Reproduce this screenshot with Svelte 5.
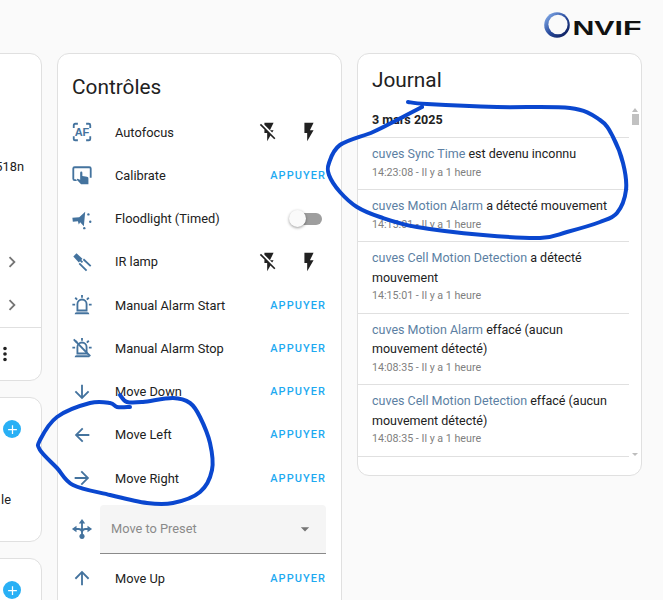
<script>
  const P = {
    flash: 'M7,2V13H10V22L17,10H13L17,2H7Z',
    flashOff: 'M17,10H13L17,2H7V4.18L15.46,12.64M3.27,3L2,4.27L7,9.27V13H10V22L13.58,15.86L17.73,20L19,18.73L3.27,3Z',
    down: 'M11,4H13V16L18.5,10.5L19.92,11.92L12,19.84L4.08,11.92L5.5,10.5L11,16V4Z',
    left: 'M20,11V13H8L13.5,18.5L12.08,19.92L4.16,12L12.08,4.08L13.5,5.5L8,11H20Z',
    right: 'M4,11V13H16L10.5,18.5L11.92,19.92L19.84,12L11.92,4.08L10.5,5.5L16,11H4Z',
    up: 'M13,20H11V8L5.5,13.5L4.08,12.08L12,4.16L19.92,12.08L18.5,13.5L13,8V20Z',
    chevron: 'M8.59,16.58L13.17,12L8.59,7.41L10,6L16,12L10,18L8.59,16.58Z',
    dots: 'M12,16A2,2 0 0,1 14,18A2,2 0 0,1 12,20A2,2 0 0,1 10,18A2,2 0 0,1 12,16M12,10A2,2 0 0,1 14,12A2,2 0 0,1 12,14A2,2 0 0,1 10,12A2,2 0 0,1 12,10M12,4A2,2 0 0,1 14,6A2,2 0 0,1 12,8A2,2 0 0,1 10,6A2,2 0 0,1 12,4Z',
    plus: 'M19,13H13V19H11V13H5V11H11V5H13V11H19V13Z',
    alarm: 'M6,6.9L3.87,4.78L5.28,3.37L7.4,5.5L6,6.9M13,1V4H11V1H13M20.13,4.78L18,6.9L16.6,5.5L18.72,3.37L20.13,4.78M4.5,10.5V12.5H1.5V10.5H4.5M19.5,10.5H22.5V12.5H19.5V10.5M6,20H18A2,2 0 0,1 20,22H4A2,2 0 0,1 6,20M12,5A6,6 0 0,1 18,11V19H6V11A6,6 0 0,1 12,5M12,7A4,4 0 0,0 8,11V17H16V11A4,4 0 0,0 12,7Z'
  };
  const pressRows = [
    { k: 'alarm', label: 'Manual Alarm Start' },
    { k: 'alarmOff', label: 'Manual Alarm Stop' },
    { k: 'down', label: 'Move Down' },
    { k: 'left', label: 'Move Left' },
    { k: 'right', label: 'Move Right' }
  ];
  const log = [
    { name: 'cuves Sync Time', msg: 'est devenu inconnu', time: '14:23:08 - Il y a 1 heure' },
    { name: 'cuves Motion Alarm', msg: 'a détecté mouvement', time: '14:15:01 - Il y a 1 heure' },
    { name: 'cuves Cell Motion Detection', msg: 'a détecté mouvement', time: '14:15:01 - Il y a 1 heure' },
    { name: 'cuves Motion Alarm', msg: 'effacé (aucun mouvement détecté)', time: '14:08:35 - Il y a 1 heure' },
    { name: 'cuves Cell Motion Detection', msg: 'effacé (aucun mouvement détecté)', time: '14:08:35 - Il y a 1 heure' }
  ];
  // Hand-drawn circles: smooth a list of points with a Catmull-Rom curve.
  function smooth(pts) {
    let d = `M${pts[0][0]} ${pts[0][1]}`;
    for (let i = 0; i < pts.length - 1; i++) {
      const a = pts[i - 1] || pts[i], b = pts[i], c = pts[i + 1], e = pts[i + 2] || c;
      const c1 = [b[0] + (c[0] - a[0]) / 6, b[1] + (c[1] - a[1]) / 6];
      const c2 = [c[0] - (e[0] - b[0]) / 6, c[1] - (e[1] - b[1]) / 6];
      d += `C${c1[0].toFixed(1)} ${c1[1].toFixed(1)} ${c2[0].toFixed(1)} ${c2[1].toFixed(1)} ${c[0]} ${c[1]}`;
    }
    return d;
  }
  const inkA = smooth([[408,102],[427,104],[497,107],[570,108],[600,120],[613,137],[623,163],[626,190],[617,213],[600,222],[567,232],[540,238],[483,235],[417,227],[380,217],[357,207],[340,192],[329,175],[329,163],[340,145],[373,132],[397,120],[422,107]]);
  const inkB = smooth([[120,395],[127,402],[143,402],[173,398],[190,403],[200,417],[210,443],[212,470],[200,492],[173,503],[147,503],[110,495],[73,485],[57,468],[40,450],[40,440],[57,417],[90,403],[110,403],[117,407],[130,407]]);
</script>

{#snippet icon(k)}
  <svg class="ic" viewBox="0 0 24 24">
    {#if k === 'af'}
      <path class="ln" d="M7.500 3H4.500A1.500 1.500 0 0 0 3 4.500V7.500M16.500 3h3A1.500 1.500 0 0 1 21 4.500V7.500M7.500 21H4.500A1.500 1.500 0 0 1 3 19.500V16.500M16.500 21h3a1.500 1.500 0 0 0 1.500-1.500V16.500" />
      <text class="af" x="12" y="16.500" text-anchor="middle">AF</text>
    {:else if k === 'cal'}
      <path class="ln" d="M8.500 17.500H4a1.500 1.500 0 0 1-1.500-1.500V5A1.500 1.500 0 0 1 4 3.500h16A1.500 1.500 0 0 1 21.500 5v10" />
      <path class="hand" d="M10 9.500a1.200 1.200 0 0 1 2.400 0V13l5 .9c1 .2 1.600.9 1.600 1.800V22h-8l-5-5 1-1 3 1.200z" />
    {:else if k === 'flood'}
      <path d="M1.500 10.500l7.500-.5 6.500-6L14 20l-4-4.500-1.500 2.500-1-3.500-5.500.5z" />
      <circle cx="19" cy="7" r="1.300" /><circle cx="21" cy="15" r="1.300" /><circle cx="14.500" cy="22" r="1.300" />
    {:else if k === 'ir'}
      <path d="M2.500 6L6 2.500l6.500 6-4 4z" />
      <path class="ln" d="M9 13.500l8 8M13.500 9l8 7.500M10 10l2.500 2.500" />
    {:else if k === 'alarm' || k === 'alarmOff'}
      <path d={P.alarm} />
      {#if k === 'alarmOff'}<path class="ln" d="M3 2.500L21 21" />{/if}
    {:else if k === 'move'}
      <path class="ln" d="M12 5v14M4.500 12H8c2.500 0 4 1.500 4 4M19.500 12H16c-2.500 0-4 1.500-4 4" />
      <path d="M12 1l3.500 5h-7zM1 12l5-3.500v7zM23 12l-5-3.500v7z" />
      <circle cx="12" cy="20" r="2.800" />
    {:else}
      <path d={P[k]} />
    {/if}
  </svg>
{/snippet}

<div class="page">
  <header class="top">
    <svg class="logo" viewBox="0 0 98 28" role="img" aria-label="ONVIF">
      <defs>
        <linearGradient id="ring" x1="0.1" y1="0.1" x2="0.9" y2="0.9">
          <stop offset="0" stop-color="#7fa8e6" />
          <stop offset=".5" stop-color="#2a4c9e" />
          <stop offset="1" stop-color="#0c1d5c" />
        </linearGradient>
      </defs>
      <circle cx="13" cy="14" r="12.800" fill="url(#ring)" />
      <ellipse cx="14" cy="13.500" rx="9.600" ry="9.800" fill="#fafafa" />
      <text class="nvif" x="28.500" y="23.500" textLength="69" lengthAdjust="spacingAndGlyphs">NVIF</text>
    </svg>
  </header>

  <div class="columns">
    <div class="col">
      <section class="card first">
        <div class="value">518n</div>
        <div class="chev one"><svg class="ic gray" viewBox="0 0 24 24"><path d={P.chevron} /></svg></div>
        <div class="chev"><svg class="ic gray" viewBox="0 0 24 24"><path d={P.chevron} /></svg></div>
        <div class="foot"><svg class="ic dark" viewBox="0 0 24 24"><path d={P.dots} /></svg></div>
      </section>
      <section class="card second">
        <span class="add"><svg viewBox="0 0 24 24"><path d={P.plus} /></svg></span>
        <div class="value le">le</div>
      </section>
      <section class="card third">
        <span class="add"><svg viewBox="0 0 24 24"><path d={P.plus} /></svg></span>
      </section>
    </div>

    <section class="card controls">
      <h2>Contrôles</h2>
      <div class="row">
        {@render icon('af')}<span class="label">Autofocus</span>
        <span class="flashes">
          <svg class="ic dark" viewBox="0 0 24 24"><path d={P.flashOff} /></svg>
          <svg class="ic dark" viewBox="0 0 24 24"><path d={P.flash} /></svg>
        </span>
      </div>
      <div class="row">
        {@render icon('cal')}<span class="label">Calibrate</span><span class="press">APPUYER</span>
      </div>
      <div class="row">
        {@render icon('flood')}<span class="label">Floodlight (Timed)</span>
        <span class="toggle"><span class="knob"></span></span>
      </div>
      <div class="row">
        {@render icon('ir')}<span class="label">IR lamp</span>
        <span class="flashes">
          <svg class="ic dark" viewBox="0 0 24 24"><path d={P.flashOff} /></svg>
          <svg class="ic dark" viewBox="0 0 24 24"><path d={P.flash} /></svg>
        </span>
      </div>
      {#each pressRows as r}
        <div class="row">
          {@render icon(r.k)}<span class="label">{r.label}</span><span class="press">APPUYER</span>
        </div>
      {/each}
      <div class="row select-row">
        {@render icon('move')}
        <div class="select">
          <span>Move to Preset</span>
          <svg class="caret" viewBox="0 0 24 24"><path d="M7,10L12,15L17,10H7Z" /></svg>
        </div>
      </div>
      <div class="row">
        {@render icon('up')}<span class="label">Move Up</span><span class="press">APPUYER</span>
      </div>
    </section>

    <section class="card journal">
      <h2>Journal</h2>
      <div class="log-wrap">
        <div class="log">
          <div class="date">3 mars 2025</div>
          {#each log as e}
            <div class="entry">
              <div class="msg"><span class="name">{e.name}</span> {e.msg}</div>
              <div class="time">{e.time}</div>
            </div>
          {/each}
        </div>
        <div class="bar">
          <span class="tri"></span>
          <span class="thumb"></span>
          <span class="tri dn"></span>
        </div>
      </div>
    </section>
  </div>

  <svg class="ink" viewBox="0 0 663 600" aria-hidden="true">
    <path d={inkA} />
    <path d={inkB} />
  </svg>
</div>

<style>
  :global(body) {
    margin: 0;
    background: #fafafa;
    font-family: Roboto, "Liberation Sans", sans-serif;
    color: #212121;
    overflow: hidden;
  }
  .page {
    position: relative;
    width: 663px;
    height: 600px;
    overflow: hidden;
  }
  .top {
    height: 53px;
    display: flex;
    justify-content: flex-end;
    align-items: flex-start;
    padding: 11px 21px 0 0;
    box-sizing: border-box;
  }
  .logo { width: 98px; height: 28px; display: block; }
  .nvif {
    font-family: "Liberation Sans", sans-serif;
    font-weight: 700;
    font-size: 21px;
    fill: #111;
  }
  .columns {
    display: flex;
    align-items: flex-start;
    gap: 15px;
    margin-left: -243px;
  }
  .col {
    width: 285px;
    flex: none;
    display: flex;
    flex-direction: column;
    gap: 16px;
  }
  .card {
    background: #fff;
    border: 1px solid #e0e0e0;
    border-radius: 12px;
    box-sizing: border-box;
  }
  .first { height: 328px; position: relative; padding-top: 103px; }
  .second { height: 145px; padding-top: 22px; }
  .third { height: 120px; padding-top: 22px; }
  .value {
    font-size: 12.800px;
    line-height: 20px;
    text-align: right;
    padding-right: 17px;
  }
  .le { margin-top: 52px; padding-right: 30px; }
  .chev { display: flex; justify-content: flex-end; padding-right: 18px; height: 43px; align-items: center; }
  .chev.one { margin-top: 63px; }
  .foot {
    border-top: 1px solid #e0e0e0;
    height: 52px;
    display: flex;
    align-items: center;
    justify-content: flex-end;
    padding-right: 25px;
    position: absolute;
    left: 0;
    right: 0;
    bottom: 0;
  }
  .add {
    display: flex;
    justify-content: center;
    align-items: center;
    width: 18px;
    height: 18px;
    border-radius: 50%;
    background: #29b0f5;
    margin-left: auto;
    margin-right: 20px;
  }
  .add svg { width: 15px; height: 15px; fill: #fff; }
  .controls {
    width: 285px;
    flex: none;
    height: 600px;
  }
  h2 {
    margin: 0;
    font-size: 20.800px;
    font-weight: 400;
    line-height: 28px;
    color: #212121;
  }
  .controls h2 { padding: 19px 0 9.400px 14px; }
  .row {
    height: 43.25px;
    display: flex;
    align-items: center;
    padding: 0 15px 0 13px;
  }
  .ic {
    width: 22px;
    height: 22px;
    flex: none;
    fill: #44739e;
  }
  .ln { fill: none; stroke: #44739e; stroke-width: 2; }
  .hand { stroke: #fff; stroke-width: 1.200px; paint-order: stroke; }
  .af { font: 700 12px "Liberation Sans", sans-serif; fill: #44739e; }
  .dark { fill: #212121; }
  .gray { fill: #757575; }
  .label {
    margin-left: 22px;
    font-size: 12.800px;
    flex: 1;
    white-space: nowrap;
  }
  .press {
    font-size: 11px;
    font-weight: 500;
    letter-spacing: 1.050px;
    color: #1eaaf1;
  }
  .flashes { display: flex; gap: 18px; margin-right: 6px; }
  .toggle {
    position: relative;
    width: 28px;
    height: 12px;
    border-radius: 6px;
    background: #9e9e9e;
    margin-right: 4px;
  }
  .knob {
    position: absolute;
    left: -5px;
    top: -2.500px;
    width: 17px;
    height: 17px;
    border-radius: 50%;
    background: #fafafa;
    box-shadow: 0 1px 3px rgba(0, 0, 0, .4);
  }
  .select-row { height: 49px; margin: 5px 0 3px; }
  .select {
    margin-left: 7px;
    flex: 1;
    height: 49px;
    box-sizing: border-box;
    background: #f5f5f5;
    border-bottom: 1px solid #8a8a8a;
    border-radius: 4px 4px 0 0;
    display: flex;
    align-items: center;
    justify-content: space-between;
    padding: 0 11px;
    font-size: 12.800px;
    color: #8a8a8a;
  }
  .caret { width: 20px; height: 20px; fill: #757575; }
  .journal { width: 285px; flex: none; height: 423px; }
  .journal h2 { padding: 12px 0 0 14px; height: 35px; }
  .log-wrap { display: flex; padding-right: 1px; }
  .log { flex: 1; min-width: 0; }
  .date {
    height: 36px;
    padding-left: 14px;
    box-sizing: border-box;
    display: flex;
    align-items: center;
    font-size: 12.500px;
    font-weight: 700;
  }
  .entry {
    border-top: 1px solid #e0e0e0;
    padding: 6px 14px 7px;
    font-size: 12.500px;
    line-height: 19.600px;
  }
  .entry:last-child { border-bottom: 1px solid #e0e0e0; }
  .name { color: #5c7fa3; }
  .time { font-size: 10.700px; line-height: 18.400px; color: #808080; }
  .bar {
    width: 10px;
    flex: none;
    display: flex;
    flex-direction: column;
    align-items: center;
    margin-left: 1px;
    padding-top: 7px;
    box-sizing: border-box;
  }
  .tri {
    width: 0;
    height: 0;
    border: 3px solid transparent;
    border-top: 0;
    border-bottom: 4px solid #bdbdbd;
  }
  .tri.dn {
    margin-top: auto;
    margin-bottom: 1px;
    border-bottom: 0;
    border-top: 3px solid #bdbdbd;
  }
  .thumb { width: 7px; height: 11px; background: #c1c1c1; margin-top: 2px; }
  .ink {
    position: absolute;
    inset: 0;
    width: 663px;
    height: 600px;
    pointer-events: none;
  }
  .ink path {
    fill: none;
    stroke: #0a47cf;
    stroke-width: 4;
    stroke-linejoin: round;
    stroke-linecap: round;
  }
</style>
